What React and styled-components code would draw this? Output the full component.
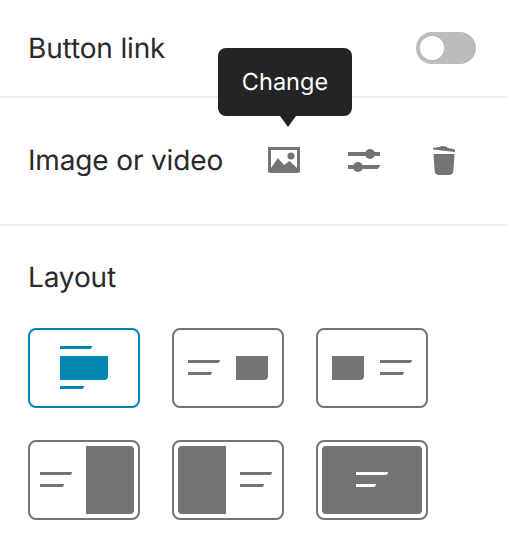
import React from 'react';
import styled, { createGlobalStyle } from 'styled-components';

const GlobalStyle = createGlobalStyle`
	html, body {
		margin: 0;
		background: #fff;
		font-family: Inter, 'Liberation Sans', sans-serif;
		color: #242424;
		text-rendering: geometricPrecision;
	}
`;

const GREY = '#747474';
const TEAL = '#0087af';

// short text line with the clipped lower right corner the thumbnails use
function TextLine({ x, y, width, color }) {
	return (
		<path
			fill={color}
			d={`M${x} ${y}h${width}v1q-.5 2-2.500 2h-${width - 2.5}z`}
		/>
	);
}

// block with a per-corner radius: [tl, tr, br, bl]
function Block({ x, y, w, h, r = [0, 0, 4, 0], color }) {
	const [tl, tr, br, bl] = r;
	return (
		<path
			fill={color}
			d={`M${x + tl} ${y}H${x + w - tr}Q${x + w} ${y} ${x + w} ${y + tr}V${y + h - br}Q${x + w} ${y + h} ${x + w - br} ${y + h}H${x + bl}Q${x} ${y + h} ${x} ${y + h - bl}V${y + tl}Q${x} ${y} ${x + tl} ${y}Z`}
		/>
	);
}

const LAYOUTS = [
	{
		id: 'stacked',
		active: true,
		block: { x: 30, y: 26, w: 48, h: 24 },
		lines: [
			{ x: 30, y: 16, width: 32 },
			{ x: 30, y: 56, width: 24 },
		],
	},
	{
		id: 'media-right',
		block: { x: 62, y: 26, w: 32, h: 24 },
		lines: [
			{ x: 14, y: 30, width: 32 },
			{ x: 14, y: 42, width: 24 },
		],
	},
	{
		id: 'media-left',
		block: { x: 14, y: 26, w: 32, h: 24 },
		lines: [
			{ x: 62, y: 30, width: 32 },
			{ x: 62, y: 42, width: 24 },
		],
	},
	{
		id: 'half-right',
		block: { x: 56, y: 4, w: 48, h: 68, r: [0, 4, 4, 0] },
		lines: [
			{ x: 10, y: 30, width: 32 },
			{ x: 10, y: 42, width: 24 },
		],
	},
	{
		id: 'half-left',
		block: { x: 4, y: 4, w: 48, h: 68, r: [4, 0, 0, 4] },
		lines: [
			{ x: 66, y: 30, width: 32 },
			{ x: 66, y: 42, width: 24 },
		],
	},
	{
		id: 'full',
		block: { x: 4, y: 4, w: 100, h: 68, r: [4, 4, 4, 4] },
		lineColor: '#fff',
		lines: [
			{ x: 38, y: 30, width: 32 },
			{ x: 38, y: 42, width: 20 },
		],
	},
];

function ImageIcon() {
	return (
		<IconSvg width="32" height="26" viewBox="0 0 32 26">
			<path
				fill={GREY}
				fillRule="evenodd"
				d="M0 0h32v24q0 2-2 2H2q-2 0-2-2zM3 3v18l7-10 6 7 5.500-4 7.500 7V3z"
			/>
			<circle cx="23" cy="9" r="3.5" fill={GREY} />
		</IconSvg>
	);
}

function SlidersIcon() {
	return (
		<IconSvg width="32" height="24" viewBox="0 0 32 24">
			<path fill={GREY} d="M0 4h32v4H0z" />
			<circle cx="22" cy="6" r="5" fill={GREY} />
			<path fill={GREY} d="M0 17h32v.6q-.8 3.400-3.500 3.400H0z" />
			<circle cx="10" cy="19" r="5" fill={GREY} />
		</IconSvg>
	);
}

function TrashIcon() {
	return (
		<IconSvg width="24" height="29" viewBox="0 0 24 29">
			<path
				fill={GREY}
				d="M1 1.800l7-.9q.5-1 2-.9l4 .5q1.200.3 1.400 1.300l7.100 1.500q.8 1.400.5 2.700L1 3.600z"
			/>
			<path
				fill={GREY}
				d="M1.500 8h21l-1.200 17q-.4 4-4.300 4H7q-3.900 0-4.300-4z"
			/>
		</IconSvg>
	);
}

function App() {
	return (
		<>
			<GlobalStyle />
			<Panel>
				<ToggleRow>
					<Label>Button link</Label>
					<Toggle role="switch" aria-checked="false">
						<Knob />
					</Toggle>
				</ToggleRow>
				<MediaRow>
					<Label>Image or video</Label>
					<Actions>
						<ActionSlot>
							<Tooltip>Change</Tooltip>
							<ImageIcon />
						</ActionSlot>
						<ActionSlot>
							<SlidersIcon />
						</ActionSlot>
						<ActionSlot>
							<TrashIcon />
						</ActionSlot>
					</Actions>
				</MediaRow>
				<LayoutSection>
					<Label>Layout</Label>
					<LayoutGrid>
						{LAYOUTS.map((layout) => {
							const color = layout.active ? TEAL : GREY;
							return (
								<LayoutCard key={layout.id} $active={layout.active}>
									<svg width="108" height="76" viewBox="0 0 108 76">
										<Block {...layout.block} color={color} />
										{layout.lines.map((line) => (
											<TextLine
												key={line.y}
												{...line}
												color={layout.lineColor || color}
											/>
										))}
									</svg>
								</LayoutCard>
							);
						})}
					</LayoutGrid>
				</LayoutSection>
			</Panel>
		</>
	);
}

export default App;

const Panel = styled.div`
	width: 508px;
	height: 550px;
	overflow: hidden;
`;

const Label = styled.div`
	font-size: 28px;
	line-height: 36px;
	letter-spacing: -0.15px;
	color: #2a2a2a;
`;

const ToggleRow = styled.div`
	height: 98px;
	box-sizing: border-box;
	padding: 0 32px 0 28px;
	display: flex;
	align-items: center;
	justify-content: space-between;
	border-bottom: 2px solid #ededed;
`;

const Toggle = styled.div`
	width: 60px;
	height: 32px;
	box-sizing: border-box;
	padding: 4px;
	border-radius: 16px;
	background: #bbbbbb;
`;

const Knob = styled.div`
	width: 24px;
	height: 24px;
	border-radius: 50%;
	background: #fff;
`;

const MediaRow = styled.div`
	height: 128px;
	box-sizing: border-box;
	padding: 44px 48px 0 28px;
	display: flex;
	align-items: flex-start;
	justify-content: space-between;
	border-bottom: 2px solid #ededed;
`;

const Actions = styled.div`
	display: flex;
	align-items: center;
	height: 36px;
	gap: 48px;
`;

const ActionSlot = styled.div`
	position: relative;
	width: 32px;
	display: flex;
	align-items: center;
	justify-content: center;
`;

const IconSvg = styled.svg`
	display: block;
`;

const Tooltip = styled.div`
	position: absolute;
	left: -50px;
	bottom: 57px;
	width: 134px;
	height: 68px;
	box-sizing: border-box;
	padding-bottom: 2px;
	border-radius: 8px;
	background: #242424;
	color: #fff;
	font-size: 23.5px;
	display: flex;
	align-items: center;
	justify-content: center;
	&::after {
		content: '';
		position: absolute;
		left: 62px;
		top: 100%;
		border-left: 8px solid transparent;
		border-right: 8px solid transparent;
		border-top: 11px solid #242424;
	}
`;

const LayoutSection = styled.div`
	padding: 33px 28px 0;
`;

const LayoutGrid = styled.div`
	margin-top: 33px;
	display: grid;
	grid-template-columns: repeat(3, 112px);
	grid-auto-rows: 80px;
	gap: 32px;
`;

const LayoutCard = styled.div`
	box-sizing: border-box;
	border: 2px solid ${(props) => (props.$active ? TEAL : GREY)};
	border-radius: 8px;
	svg {
		display: block;
	}
`;
